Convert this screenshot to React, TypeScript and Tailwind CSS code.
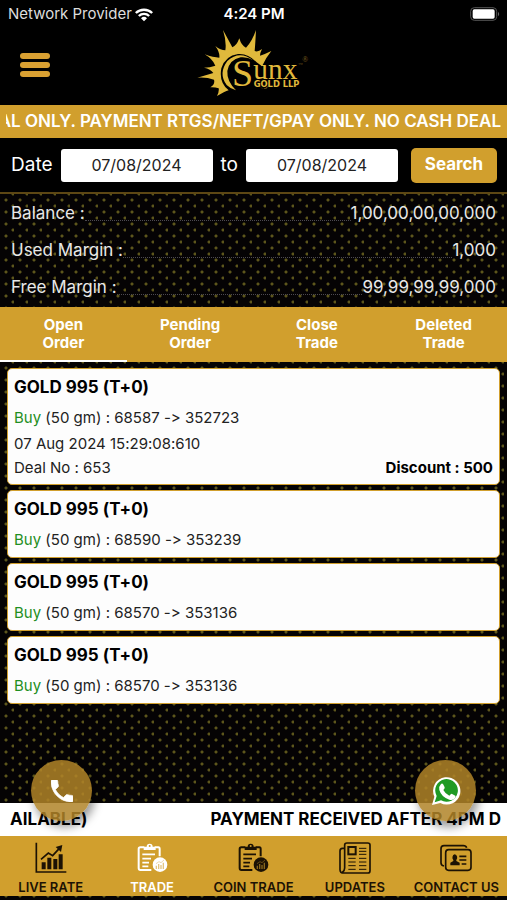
import type { ReactNode } from "react";

const GOLD = "#e0b93c";

function Logo() {
  return (
    <svg viewBox="0 0 390 240" className="-my-1 h-20 w-[130px]" role="img" aria-label="Sunx Gold LLP">
      <path
        fill={GOLD}
        d="M105 15 L133 67 Q146 62 154 40 Q160 62 174 68 Q192 50 204 15 Q202 55 200 78 Q210 82 222 72 Q216 84 216 92 Q230 88 250 78 Q232 100 222 124 L206 112 Q180 84 150 87 Q112 92 100 130 Q92 172 122 196 Q110 200 87 213 Q94 198 92 190 Q80 186 67 187 Q82 178 78 164 Q56 156 28 158 Q56 150 76 144 Q68 132 48 128 Q66 128 82 122 Q74 102 50 88 Q76 98 94 98 Q96 82 82 63 Q98 76 112 76 Q116 50 105 15Z"
      />
      <path
        fill={GOLD}
        d="M196 106 Q154 74 118 108 Q90 146 116 180 Q128 192 144 196 Q116 168 118 138 Q124 104 158 97 Q178 95 196 106Z"
      />
      <g fill={GOLD} style={{ fontFamily: '"Liberation Serif", serif' }}>
        <text x="132" y="184" fontSize="114">S</text>
        <text x="196" y="163" fontSize="88">unx</text>
        <text x="330" y="124" fontSize="14" opacity="0.5">™</text>
        <text x="343" y="110" fontSize="23" opacity="0.5">®</text>
      </g>
      <text x="197" y="185" fill={GOLD} fontSize="25" fontWeight="700" style={{ fontFamily: '"DejaVu Sans", sans-serif' }}>
        GOLD LLP
      </text>
      <path d="M216 186 Q232 198 244 178 L236 190 Q226 194 216 186Z" fill={GOLD} />
    </svg>
  );
}

function WifiIcon() {
  return (
    <svg viewBox="0 0 60 44" className="h-[15px] w-5" fill="#fff" aria-hidden="true">
      <path d="M3 15 A39 39 0 0 1 57 15 L52 20 A32 32 0 0 0 8 20Z" />
      <path d="M12 24 A26 26 0 0 1 48 24 L43 29 A19 19 0 0 0 17 29Z" />
      <path d="M21 33 A13 13 0 0 1 39 33 L30 42Z" />
    </svg>
  );
}

function BatteryIcon() {
  return (
    <svg viewBox="0 0 90 42" className="h-3.5 w-[30px]" aria-hidden="true">
      <rect x="2" y="2" width="78" height="38" rx="11" fill="none" stroke="#555" strokeWidth="3" />
      <rect x="8" y="7" width="66" height="28" rx="5" fill="#fff" />
      <path d="M84 14 Q91 21 84 28Z" fill="#666" />
    </svg>
  );
}

function ChartIcon() {
  return (
    <svg viewBox="0 0 96 96" className="size-8" fill="none" stroke="currentColor" strokeWidth="4" aria-hidden="true">
      <path d="M4 2 V90 H94" strokeWidth="5" />
      <path d="M18 52 L40 33 L53 41 L73 19" strokeWidth="5" />
      <path d="M62 15 L82 9 L78 30Z" fill="currentColor" stroke="none" />
      <path d="M26 82 V61 M43 82 V47 M61 82 V51 M77 82 V37" strokeWidth="12" />
    </svg>
  );
}

function ClipboardIcon({ inner }: { inner: string }) {
  return (
    <svg viewBox="0 0 96 96" className="size-8" fill="none" stroke="currentColor" strokeWidth="6" aria-hidden="true">
      <path d="M25 16 H13 Q8 16 8 21 V78 Q8 84 13 84 H46" />
      <path d="M56 16 H67 Q71 16 71 21 V43" />
      <path d="M23 24 V14 H32 A9 9 0 0 1 50 14 H59 V24Z" fill="currentColor" stroke="none" />
      <circle cx="41" cy="12" r="3" fill={inner} stroke="none" />
      <path d="M19 37 H57 M19 50 H45 M19 62 H39 M19 73 H37" strokeWidth="5" />
      <circle cx="72" cy="68" r="22" fill="currentColor" stroke="none" />
      <path d="M61 81 V71 M68 81 V66 M75 81 V69 M82 81 V62" stroke={inner} strokeWidth="4" opacity="0.6" />
      <path d="M60 65 L69 59 L75 62 L84 54" stroke={inner} strokeWidth="2" opacity="0.6" />
    </svg>
  );
}

function NewsIcon() {
  return (
    <svg viewBox="0 0 96 96" className="size-8" fill="none" stroke="currentColor" strokeWidth="5" aria-hidden="true">
      <path d="M17 9 Q17 3 24 3 H86 Q93 3 93 9 V86 Q93 93 86 93 H15 Q3 93 3 83 V27 Q3 19 10 19 H15 M17 9 V78 Q17 86 10 91" />
      <rect x="28" y="15" width="22" height="22" strokeWidth="6" />
      <path d="M60 19 H82 M60 28 H82 M60 37 H82 M28 49 H50 M60 49 H82 M28 60 H50 M60 60 H82 M28 71 H50 M60 71 H82 M28 82 H50 M60 82 H82" strokeWidth="3" />
    </svg>
  );
}

function ContactIcon() {
  return (
    <svg viewBox="0 0 96 96" className="size-8" fill="none" stroke="currentColor" strokeWidth="5" aria-hidden="true">
      <path d="M12 72 Q3 70 3 62 V20 Q3 11 12 11 H70 Q78 11 80 17" />
      <rect x="17" y="23" width="76" height="62" rx="9" />
      <path d="M44 37 a9 10 0 0 1 5 17 v3 l10 5 v8 H31 v-8 l9 -5 v-3 a9 10 0 0 1 4 -17Z" fill="currentColor" stroke="none" />
      <path d="M58 43 H79 M58 54 H79 M65 66 H79" />
    </svg>
  );
}

function WhatsAppIcon() {
  return (
    <svg viewBox="0 0 90 90" className="size-[30px]" aria-hidden="true">
      <path d="M3 87 L10 62 A41 41 0 1 1 28 81Z" fill="#fff" />
      <path d="M11 79 L17 60 A34 34 0 1 1 30 73Z" fill="#1f9a24" />
      <path
        d="M30 24 q3 -3 6 0 l5 10 q1 3 -4 8 q6 12 18 17 q5 -6 7 -6 l11 6 q2 2 -1 7 q-6 8 -17 5 q-24 -8 -30 -29 q-2 -11 5 -18Z"
        fill="#fff"
      />
    </svg>
  );
}

function PhoneIcon() {
  return (
    <svg viewBox="3 3 18 18" className="size-[22px]" fill="#fff" stroke="#fff" strokeWidth="0.6" aria-hidden="true">
      <path d="M6.6 10.8c1.4 2.8 3.8 5.1 6.6 6.6l2.2-2.2c.3-.3.7-.4 1-.2 1.1.4 2.3.6 3.6.6.6 0 1 .4 1 1V20c0 .6-.4 1-1 1C10.6 21 3 13.4 3 4c0-.6.5-1 1-1h3.5c.6 0 1 .4 1 1 0 1.3.2 2.5.6 3.6.1.3 0 .7-.2 1L6.6 10.8z" />
    </svg>
  );
}

const balances = [
  { label: "Balance :", value: "1,00,00,00,00,000" },
  { label: "Used Margin :", value: "1,000" },
  { label: "Free Margin :", value: "99,99,99,99,000" },
];

const tabs = [
  ["Open", "Order"],
  ["Pending", "Order"],
  ["Close", "Trade"],
  ["Deleted", "Trade"],
];

type Order = { rate: string; id: string; time?: string; deal?: string; discount?: string };

const orders: Order[] = [
  { rate: "68587", id: "352723", time: "07 Aug 2024 15:29:08:610", deal: "653", discount: "500" },
  { rate: "68590", id: "353239" },
  { rate: "68570", id: "353136" },
  { rate: "68570", id: "353136" },
];

function OrderCard({ order }: { order: Order }) {
  return (
    <article className="rounded-[5px] border border-[#d19f2d] bg-[#fdfdfd] px-1.5 pt-1.5 pb-[5px] text-[#222]">
      <h2 className="text-[17px] leading-6 font-bold text-black">GOLD 995 (T+0)</h2>
      <p className="mt-[7px] text-[15px] leading-6">
        <span className="text-[#1f8f22]">Buy</span> (50 gm) : {order.rate} -&gt; {order.id}
      </p>
      {order.time && (
        <>
          <p className="mt-0.5 text-[15px] leading-6">{order.time}</p>
          <p className="flex justify-between text-[15px] leading-[23px]">
            <span>Deal No : {order.deal}</span>
            <span className="font-bold text-black">Discount : {order.discount}</span>
          </p>
        </>
      )}
    </article>
  );
}

const nav: { label: string; icon: ReactNode; active?: boolean }[] = [
  { label: "LIVE RATE", icon: <ChartIcon /> },
  { label: "TRADE", icon: <ClipboardIcon inner="#d19f2d" />, active: true },
  { label: "COIN TRADE", icon: <ClipboardIcon inner="#d19f2d" /> },
  { label: "UPDATES", icon: <NewsIcon /> },
  { label: "CONTACT US", icon: <ContactIcon /> },
];

export default function App() {
  return (
    <div className="flex min-h-screen flex-col bg-[#050304] bg-[radial-gradient(circle_at_6px_8px,#5d561c_1px,transparent_2px),radial-gradient(circle_at_13px_2px,#5d561c_1px,transparent_2px)] bg-[length:14px_12px] font-['Inter','Liberation_Sans',sans-serif] text-white [font-feature-settings:'calt'_0]">
      <header className="bg-black pb-[3px]">
        <div className="grid h-7 grid-cols-3 items-center pr-[7px] pl-2 text-[15px]">
          <div className="flex items-center gap-0.5 whitespace-nowrap text-[#ddd]">
            Network Provider
            <WifiIcon />
          </div>
          <div className="text-center font-semibold">4:24 PM</div>
          <div className="flex justify-end">
            <BatteryIcon />
          </div>
        </div>
        <div className="grid h-[74px] grid-cols-3 items-center px-5">
          <button aria-label="Menu" className="flex w-[30px] flex-col gap-[3px]">
            <span className="h-1.5 rounded-full bg-[#d9a032]" />
            <span className="h-1.5 rounded-full bg-[#d9a032]" />
            <span className="h-1.5 rounded-full bg-[#d9a032]" />
          </button>
          <div className="flex justify-center">
            <Logo />
          </div>
        </div>
      </header>

      <div className="bg-[#d19f2d] px-1.5">
        <p className="flex h-[33px] items-center justify-end overflow-hidden text-[17px] font-semibold whitespace-nowrap">
          AL ONLY. PAYMENT RTGS/NEFT/GPAY ONLY. NO CASH DEAL
        </p>
      </div>

      <form className="flex h-14 items-center border-b-2 border-[#5d4714] bg-black pr-2.5 pl-[11px] text-[19px]" onSubmit={(e) => e.preventDefault()}>
        <label htmlFor="from">Date</label>
        <input id="from" defaultValue="07/08/2024" className="ml-2 h-[33px] w-0 flex-1 rounded-[3px] bg-white text-center text-base text-[#222]" />
        <label htmlFor="to" className="mx-2">to</label>
        <input id="to" defaultValue="07/08/2024" className="h-[33px] w-0 flex-1 rounded-[3px] bg-white text-center text-base text-[#222]" />
        <button type="submit" className="ml-[13px] h-[35px] w-[86px] rounded-[5px] bg-[#d19f2d] text-[17px] font-bold">
          Search
        </button>
      </form>

      <dl className="flex flex-col gap-[13px] px-[11px] pt-[7px] pb-2 text-[17px] leading-6 text-[#e8e8e8]">
        {balances.map((b) => (
          <div key={b.label} className="flex">
            <dt>{b.label}</dt>
            <div className="mb-1 flex-1 border-b border-dotted border-[#4c4950]" />
            <dd>{b.value}</dd>
          </div>
        ))}
      </dl>

      <div role="tablist" className="grid h-[55px] grid-cols-4 bg-[#d19f2d]">
        {tabs.map(([first, second], i) => (
          <button
            key={first}
            role="tab"
            aria-selected={i === 0}
            className={`border-b-2 text-[15px] leading-[18px] font-bold ${i === 0 ? "border-white" : "border-[#d19f2d]"}`}
          >
            <span className="block">{first}</span>
            <span className="block">{second}</span>
          </button>
        ))}
      </div>

      <main className="flex flex-1 flex-col gap-[5px] px-[7px] pt-1.5 pb-12">
        {orders.map((o, i) => (
          <OrderCard key={i} order={o} />
        ))}
      </main>

      <footer className="relative pb-1">
        <div className="absolute -top-[43px] right-0 left-0 flex justify-between px-[31px]">
          <a href="#call" aria-label="Call" className="flex size-[61px] items-center justify-center rounded-full bg-[#b08428d9] shadow-[3px_6px_10px_rgba(0,0,0,0.4)]">
            <PhoneIcon />
          </a>
          <a href="#whatsapp" aria-label="WhatsApp" className="flex size-[61px] items-center justify-center rounded-full bg-[#b08428d9] shadow-[3px_6px_10px_rgba(0,0,0,0.4)]">
            <WhatsAppIcon />
          </a>
        </div>
        <div className="bg-white px-1.5">
          <p className="flex h-[33px] items-center justify-end gap-[123px] overflow-hidden text-[17px] font-bold whitespace-nowrap text-black">
            <span>AILABLE)</span>
            <span>PAYMENT RECEIVED AFTER 4PM D</span>
          </p>
        </div>
        <nav className="grid h-[60px] grid-cols-5 bg-[#d19f2d]">
          {nav.map((n) => (
            <a
              key={n.label}
              href={"#" + n.label.toLowerCase().replace(" ", "-")}
              className={`flex flex-col items-center gap-1 pt-1.5 text-[13px] leading-[18px] font-semibold whitespace-nowrap ${n.active ? "text-white" : "text-[#1c1204]"}`}
            >
              {n.icon}
              {n.label}
            </a>
          ))}
        </nav>
      </footer>
    </div>
  );
}
